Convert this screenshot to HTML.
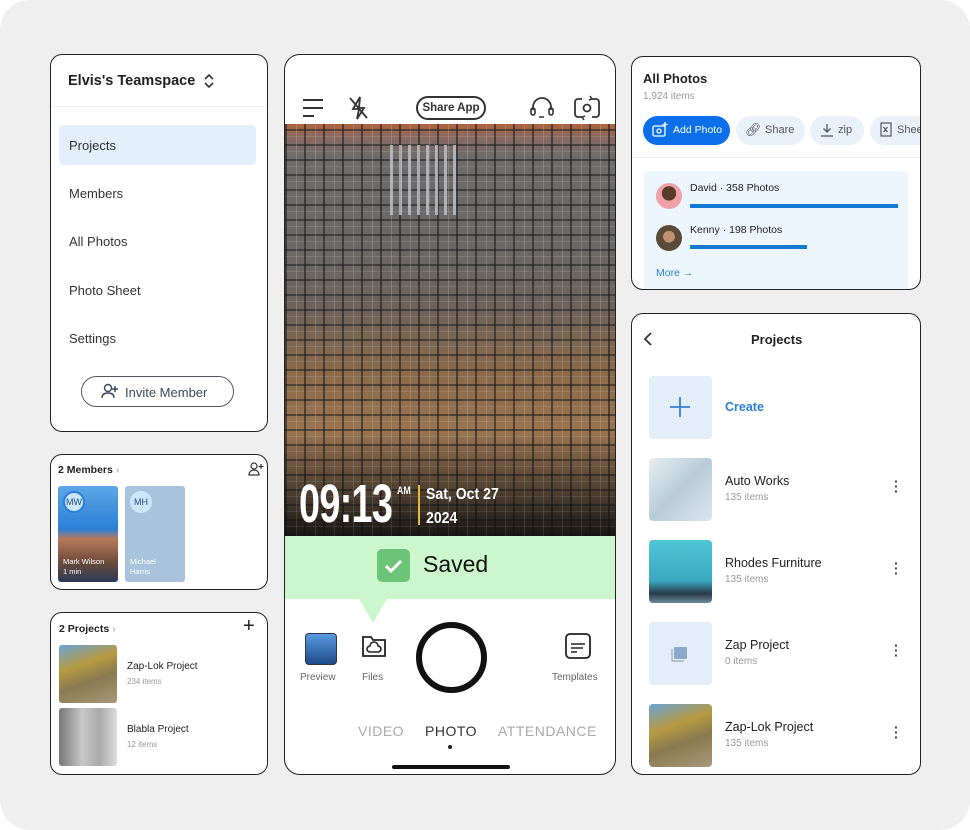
<!DOCTYPE html>
<html><head><meta charset="utf-8"><style>
*{box-sizing:border-box;margin:0;padding:0}
body{width:970px;height:830px;background:#fff;font-family:"Liberation Sans",sans-serif;position:relative;overflow:hidden;color:#222}
.bg{position:absolute;left:0;top:0;width:970px;height:830px;background:#efefef;border-radius:30px}
.card{position:absolute;background:#fff;border:1.5px solid #222;border-radius:12px;overflow:hidden}
.abs{position:absolute}
.nav{position:absolute;left:18px;font-size:13px;color:#333}
.g{color:#999}
</style></head><body>
<div class="bg"></div>

<!-- Left top -->
<div class="card" style="left:50px;top:54px;width:218px;height:378px">
  <div class="abs" style="left:17px;top:18px;font-size:14.5px;font-weight:bold;color:#222">Elvis's Teamspace</div>
  <svg class="abs" style="left:152px;top:18px" width="12" height="16" viewBox="0 0 12 16"><path d="M2 6l4-4 4 4M2 10l4 4 4-4" fill="none" stroke="#333" stroke-width="1.6"/></svg>
  <div class="abs" style="left:0;top:51px;width:218px;height:1px;background:#eee"></div>
  <div class="abs" style="left:8px;top:70px;width:197px;height:40px;background:#e4effc;border-radius:5px"></div>
  <div class="nav" style="top:83px">Projects</div>
  <div class="nav" style="top:131px">Members</div>
  <div class="nav" style="top:179px">All Photos</div>
  <div class="nav" style="top:228px">Photo Sheet</div>
  <div class="nav" style="top:276px">Settings</div>
  <div class="abs" style="left:30px;top:321px;width:153px;height:31px;border:1.5px solid #556;border-radius:16px;font-size:13px;color:#3a4a5c;padding:8px 0 0 43px">Invite Member</div>
  <svg class="abs" style="left:50px;top:328px" width="18" height="16" viewBox="0 0 18 16"><circle cx="7" cy="5" r="3.5" fill="none" stroke="#3a4a5c" stroke-width="1.4"/><path d="M1 15c0-4 3-5 6-5s6 1 6 5M14 3v6M11 6h6" fill="none" stroke="#3a4a5c" stroke-width="1.4"/></svg>
</div>

<!-- Members -->
<div class="card" style="left:50px;top:454px;width:218px;height:136px">
  <div class="abs" style="left:7px;top:9px;font-size:10.5px;font-weight:bold">2 Members <span class="g" style="font-weight:normal">›</span></div>
  <svg class="abs" style="left:197px;top:7px" width="16" height="14" viewBox="0 0 16 14"><circle cx="6" cy="4" r="3" fill="none" stroke="#333" stroke-width="1.2"/><path d="M1 13c0-3 2-5 5-5s5 2 5 5zM13 2v5M10.5 4.5h5" fill="none" stroke="#333" stroke-width="1.2"/></svg>
  <div class="abs" style="left:7px;top:31px;width:60px;height:96px;border-radius:3px;background:linear-gradient(180deg,#5ea6e6 0%,#2a7fd8 45%,#b87a5a 55%,#6a4a3a 80%,#2a3a5a 100%)"></div>
  <div class="abs" style="left:12px;top:36px;width:22px;height:22px;border-radius:50%;background:#cde6fb;border:2px solid #2a7fd8;font-size:9px;color:#1e4f86;text-align:center;line-height:18px">MW</div>
  <div class="abs" style="left:12px;top:102px;font-size:7.5px;color:#fff;line-height:10px">Mark Wilson<br>1 min</div>
  <div class="abs" style="left:74px;top:31px;width:60px;height:96px;border-radius:3px;background:#a9c3dc"></div>
  <div class="abs" style="left:79px;top:36px;width:22px;height:22px;border-radius:50%;background:#cde6fb;font-size:9px;color:#1e4f86;text-align:center;line-height:22px">MH</div>
  <div class="abs" style="left:79px;top:102px;font-size:7.5px;color:#fff;line-height:10px">Michael<br>Harris</div>
</div>

<!-- Projects small -->
<div class="card" style="left:50px;top:612px;width:218px;height:163px">
  <div class="abs" style="left:8px;top:10px;font-size:10.5px;font-weight:bold">2 Projects <span class="g" style="font-weight:normal">›</span></div>
  <div class="abs" style="left:192px;top:2px;font-size:20px;font-weight:300">+</div>
  <div class="abs" style="left:8px;top:32px;width:58px;height:58px;border-radius:3px;background:linear-gradient(160deg,#6aa5d8 0%,#b79a40 35%,#8a7a50 60%,#a89878 100%)"></div>
  <div class="abs" style="left:76px;top:48px;font-size:10px">Zap-Lok Project</div>
  <div class="abs g" style="left:76px;top:64px;font-size:8px">234 items</div>
  <div class="abs" style="left:8px;top:95px;width:58px;height:58px;border-radius:3px;background:linear-gradient(90deg,#777 0%,#c8c8c8 40%,#aaa 70%,#ddd 100%)"></div>
  <div class="abs" style="left:76px;top:111px;font-size:10px">Blabla Project</div>
  <div class="abs g" style="left:76px;top:127px;font-size:8px">12 items</div>
</div>

<!-- Phone -->
<div class="card" style="left:284px;top:54px;width:332px;height:721px;border-radius:16px">
  <svg class="abs" style="left:16px;top:42px" width="24" height="22" viewBox="0 0 24 22"><path d="M2 3h20M2 11h20M2 19h11" stroke="#333" stroke-width="2"/></svg>
  <svg class="abs" style="left:62px;top:40px" width="22" height="26" viewBox="0 0 22 26"><path d="M13 2L6 14h6l-2 10 7-11h-5zM3 3l17 20" fill="none" stroke="#333" stroke-width="1.8"/></svg>
  <div class="abs" style="left:131px;top:41px;width:70px;height:24px;border:2px solid #333;border-radius:12px;font-size:11.5px;font-weight:bold;color:#333;text-align:center;line-height:20px">Share App</div>
  <svg class="abs" style="left:244px;top:40px" width="26" height="26" viewBox="0 0 26 26"><path d="M4 15v-3a9 9 0 0118 0v3" fill="none" stroke="#333" stroke-width="1.8"/><rect x="2" y="13" width="4" height="7" rx="2" fill="none" stroke="#333" stroke-width="1.6"/><rect x="20" y="13" width="4" height="7" rx="2" fill="none" stroke="#333" stroke-width="1.6"/><path d="M10 22h5" stroke="#333" stroke-width="1.6"/></svg>
  <svg class="abs" style="left:288px;top:40px" width="28" height="26" viewBox="0 0 28 26"><path d="M9 4H5a3 3 0 00-3 3v12a3 3 0 003 3h4M19 4h4a3 3 0 013 3v12a3 3 0 01-3 3h-4" fill="none" stroke="#333" stroke-width="1.8"/><path d="M17 1l2 3-3 1M11 25l-2-3 3-1" fill="none" stroke="#333" stroke-width="1.5"/><circle cx="14" cy="13" r="3.5" fill="none" stroke="#333" stroke-width="1.8"/></svg>
  <!-- photo -->
  <div class="abs" style="left:0;top:69px;width:332px;height:412px;background:
    repeating-linear-gradient(90deg,rgba(30,30,30,.6) 0 2px,transparent 2px 11px,rgba(200,200,200,.25) 11px 12px,transparent 12px 19px),
    repeating-linear-gradient(0deg,rgba(35,35,35,.6) 0 2px,transparent 2px 9px,rgba(190,190,190,.2) 9px 10px,transparent 10px 15px),
    linear-gradient(180deg,#b0623e 0%,#8a6a60 3%,#6e6c6a 8%,#6a6866 30%,#6e625a 45%,#8a6a4a 60%,#9a7450 75%,#5a4a3a 92%,#2a2520 100%)"></div>
  <div class="abs" style="left:0;top:69px;width:332px;height:412px;background:linear-gradient(180deg,transparent 75%,rgba(0,0,0,.4) 100%)"></div>
  <div class="abs" style="left:105px;top:90px;width:70px;height:70px;background:repeating-linear-gradient(90deg,#c0c4cc 0 3px,transparent 3px 9px);opacity:.8"></div>
  <div class="abs" style="left:14px;top:418px;font-family:'Liberation Sans Narrow','Liberation Sans',sans-serif;font-size:54px;color:#fff;font-weight:bold;transform:scaleX(.7);transform-origin:left;letter-spacing:-1px">09:13</div>
  <div class="abs" style="left:112px;top:430px;font-size:11px;color:#fff;font-weight:bold;transform:scaleX(.8);transform-origin:left">AM</div>
  <div class="abs" style="left:133px;top:430px;width:2px;height:40px;background:#e8b838"></div>
  <div class="abs" style="left:141px;top:428px;font-size:16px;color:#fff;font-weight:bold;line-height:24px;transform:scaleX(.88);transform-origin:left">Sat, Oct 27<br>2024</div>
  <!-- saved -->
  <div class="abs" style="left:0;top:481px;width:332px;height:63px;background:#ccf7cc"></div>
  <div class="abs" style="left:74px;top:544px;width:0;height:0;border-left:14px solid transparent;border-right:14px solid transparent;border-top:24px solid #ccf7cc"></div>
  <div class="abs" style="left:92px;top:494px;width:33px;height:33px;border-radius:5px;background:#6cc479"></div>
  <svg class="abs" style="left:92px;top:494px" width="33" height="33" viewBox="0 0 33 33"><path d="M9 17l5 5 10-10" fill="none" stroke="#fff" stroke-width="3"/></svg>
  <div class="abs" style="left:138px;top:496px;font-size:23px;color:#111">Saved</div>
  <!-- controls -->
  <div class="abs" style="left:20px;top:578px;width:32px;height:32px;border-radius:4px;border:1px solid #334;background:linear-gradient(180deg,#5a9ae0,#1e4a8a)"></div>
  <div class="abs" style="left:15px;top:617px;font-size:10px;color:#666">Preview</div>
  <svg class="abs" style="left:76px;top:578px" width="26" height="26" viewBox="0 0 26 26"><path d="M2 4h8l2 3h12v16H2z" fill="none" stroke="#222" stroke-width="1.8"/><path d="M9 19a3 3 0 010-6 4 4 0 018 0 3 3 0 010 6z" fill="none" stroke="#222" stroke-width="1.6"/></svg>
  <div class="abs" style="left:77px;top:617px;font-size:10px;color:#666">Files</div>
  <div class="abs" style="left:131px;top:567px;width:71px;height:71px;border:6px solid #111;border-radius:50%"></div>
  <svg class="abs" style="left:280px;top:578px" width="26" height="26" viewBox="0 0 26 26"><rect x="1" y="1" width="24" height="24" rx="4" fill="none" stroke="#222" stroke-width="1.8"/><path d="M6 11h14M6 15h12M6 19h6" stroke="#222" stroke-width="1.6"/></svg>
  <div class="abs" style="left:267px;top:617px;font-size:10px;color:#666">Templates</div>
  <div class="abs" style="left:73px;top:668px;font-size:14px;color:#aaa;letter-spacing:.5px">VIDEO</div>
  <div class="abs" style="left:140px;top:668px;font-size:14px;color:#333;letter-spacing:.5px">PHOTO</div>
  <div class="abs" style="left:213px;top:668px;font-size:14px;color:#aaa;letter-spacing:.5px">ATTENDANCE</div>
  <div class="abs" style="left:163px;top:690px;width:4px;height:4px;border-radius:50%;background:#222"></div>
  <div class="abs" style="left:107px;top:710px;width:118px;height:4px;border-radius:2px;background:#111"></div>
</div>

<!-- All Photos -->
<div class="card" style="left:631px;top:56px;width:290px;height:234px">
  <div class="abs" style="left:11px;top:14px;font-size:13px;font-weight:bold;color:#222">All Photos</div>
  <div class="abs g" style="left:11px;top:34px;font-size:10px">1,924 items</div>
  <div class="abs" style="left:11px;top:59px;width:87px;height:29px;border-radius:15px;background:#0a6fe8;color:#fff;font-size:10.5px;padding:8px 0 0 30px">Add Photo</div>
  <svg class="abs" style="left:20px;top:65px" width="16" height="16" viewBox="0 0 16 16"><rect x="1" y="4" width="12" height="10" rx="1.5" fill="none" stroke="#fff" stroke-width="1.3"/><circle cx="7" cy="9" r="2" fill="none" stroke="#fff" stroke-width="1.3"/><path d="M13 0v5M10.5 2.5h5" stroke="#fff" stroke-width="1.3"/></svg>
  <div class="abs" style="left:104px;top:59px;width:69px;height:29px;border-radius:15px;background:#e9f1fb;color:#555;font-size:11px;padding:8px 0 0 29px">Share</div>
  <div class="abs" style="left:113px;top:65px;font-size:13px;color:#555">🔗︎</div>
  <div class="abs" style="left:178px;top:59px;width:54px;height:29px;border-radius:15px;background:#e9f1fb;color:#555;font-size:11px;padding:8px 0 0 28px">zip</div>
  <svg class="abs" style="left:188px;top:66px" width="14" height="14" viewBox="0 0 14 14"><path d="M7 1v8M3.5 5.5L7 9l3.5-3.5M1 13h12" fill="none" stroke="#555" stroke-width="1.3"/></svg>
  <div class="abs" style="left:238px;top:59px;width:70px;height:29px;border-radius:15px;background:#e9f1fb;color:#555;font-size:11px;padding:8px 0 0 27px">Shee</div>
  <svg class="abs" style="left:248px;top:65px" width="14" height="16" viewBox="0 0 14 16"><rect x="1" y="1" width="10" height="13" fill="none" stroke="#555" stroke-width="1.2"/><path d="M3.5 5l4 5M7.5 5l-4 5" stroke="#555" stroke-width="1.2"/></svg>
  <div class="abs" style="left:0;top:100px;width:290px;height:1px;background:#eee"></div>
  <div class="abs" style="left:12px;top:114px;width:264px;height:120px;background:#eef6fd;border-radius:4px"></div>
  <div class="abs" style="left:24px;top:126px;width:26px;height:26px;border-radius:50%;background:radial-gradient(circle at 50% 40%,#5a3a2a 0 35%,#f0a0a8 36%)"></div>
  <div class="abs" style="left:58px;top:125px;font-size:10.5px">David · 358 Photos</div>
  <div class="abs" style="left:58px;top:147px;width:208px;height:4px;background:#1479d4"></div>
  <div class="abs" style="left:24px;top:168px;width:26px;height:26px;border-radius:50%;background:radial-gradient(circle at 50% 45%,#c09070 0 30%,#5a4a38 31%)"></div>
  <div class="abs" style="left:58px;top:167px;font-size:10.5px">Kenny · 198 Photos</div>
  <div class="abs" style="left:58px;top:188px;width:117px;height:4px;background:#1479d4"></div>
  <div class="abs" style="left:24px;top:210px;font-size:10.5px;color:#2a7fd8">More →</div>
</div>

<!-- Projects big -->
<div class="card" style="left:631px;top:313px;width:290px;height:462px">
  <svg class="abs" style="left:10px;top:17px" width="12" height="16" viewBox="0 0 12 16"><path d="M9 2L3 8l6 6" fill="none" stroke="#333" stroke-width="1.8"/></svg>
  <div class="abs" style="left:119px;top:18px;font-size:13px;font-weight:bold;color:#222">Projects</div>
  <div class="abs" style="left:17px;top:62px;width:63px;height:63px;border-radius:4px;background:#e4eef9"></div>
  <svg class="abs" style="left:37px;top:82px" width="22" height="22" viewBox="0 0 22 22"><path d="M11 1v20M1 11h20" stroke="#3a7fd0" stroke-width="1.8"/></svg>
  <div class="abs" style="left:93px;top:86px;font-size:12.5px;font-weight:bold;color:#2a7fd8">Create</div>
  <div class="abs" style="left:17px;top:144px;width:63px;height:63px;border-radius:4px;background:linear-gradient(135deg,#e8eef2 0%,#b8ccd8 50%,#dce6ee 100%)"></div>
  <div class="abs" style="left:93px;top:160px;font-size:12.5px">Auto Works</div>
  <div class="abs g" style="left:93px;top:178px;font-size:10px">135 items</div>
  <div class="abs" style="left:17px;top:226px;width:63px;height:63px;border-radius:4px;background:linear-gradient(180deg,#4ec6d6 0%,#3aa8c0 65%,#2a3a48 85%,#6a8a98 100%)"></div>
  <div class="abs" style="left:93px;top:242px;font-size:12.5px">Rhodes Furniture</div>
  <div class="abs g" style="left:93px;top:260px;font-size:10px">135 items</div>
  <div class="abs" style="left:17px;top:308px;width:63px;height:63px;border-radius:4px;background:#e4eef9"></div>
  <svg class="abs" style="left:39px;top:330px" width="18" height="18" viewBox="0 0 18 18"><rect x="3" y="3" width="13" height="12" rx="1" fill="#8ea8cc"/><path d="M1 5v12h12" fill="none" stroke="#8ea8cc" stroke-width="1.2"/></svg>
  <div class="abs" style="left:93px;top:324px;font-size:12.5px">Zap Project</div>
  <div class="abs g" style="left:93px;top:342px;font-size:10px">0 items</div>
  <div class="abs" style="left:17px;top:390px;width:63px;height:63px;border-radius:4px;background:linear-gradient(160deg,#6aa5d8 0%,#b79a40 35%,#8a7a50 60%,#a89878 100%)"></div>
  <div class="abs" style="left:93px;top:406px;font-size:12.5px">Zap-Lok Project</div>
  <div class="abs g" style="left:93px;top:424px;font-size:10px">135 items</div>
  <div class="abs" style="left:262px;top:165px;font-size:14px;font-weight:bold;line-height:5px;color:#444">·<br>·<br>·</div>
  <div class="abs" style="left:262px;top:247px;font-size:14px;font-weight:bold;line-height:5px;color:#444">·<br>·<br>·</div>
  <div class="abs" style="left:262px;top:329px;font-size:14px;font-weight:bold;line-height:5px;color:#444">·<br>·<br>·</div>
  <div class="abs" style="left:262px;top:411px;font-size:14px;font-weight:bold;line-height:5px;color:#444">·<br>·<br>·</div>
</div>
</body></html>
